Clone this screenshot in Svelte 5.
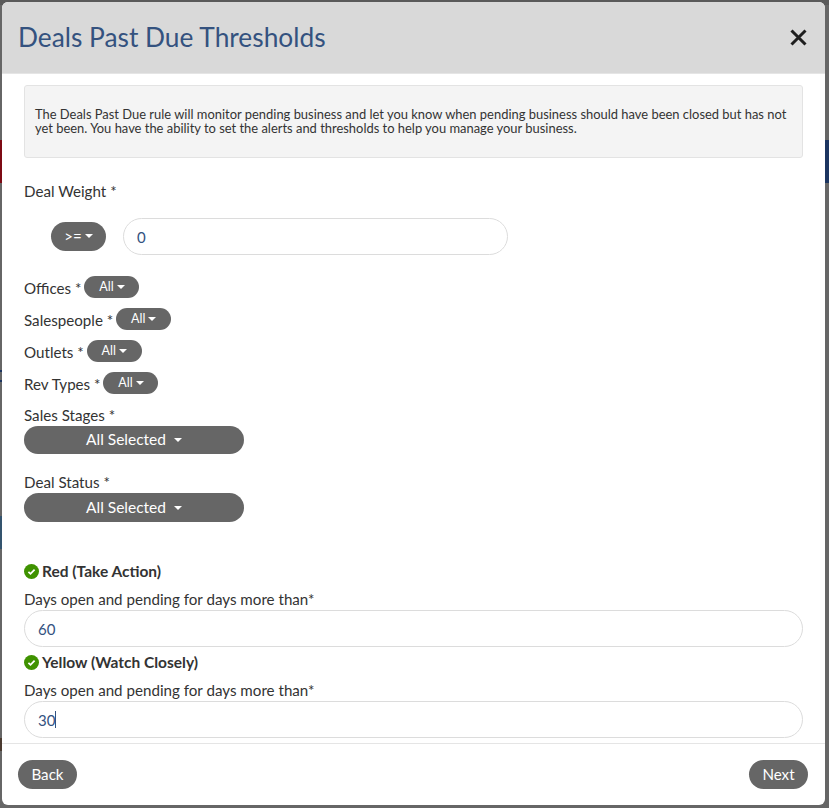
<script>
  const filters = [
    { label: 'Offices *' },
    { label: 'Salespeople *' },
    { label: 'Outlets *' },
    { label: 'Rev Types *' }
  ];
  const backdrop = [
    { cls: 'red', top: 140, h: 43, left: 0, w: 2 },
    { cls: 'navy', top: 140, h: 43, left: 825, w: 4 },
    { cls: 'navy', top: 370, h: 2, left: 0, w: 2 },
    { cls: 'navy', top: 380, h: 2, left: 0, w: 2 },
    { cls: 'blue', top: 516, h: 33, left: 0, w: 2 },
    { cls: 'brown', top: 738, h: 13, left: 0, w: 2 }
  ];
</script>

<div class="page">
  {#each backdrop as b}
    <div class="bg-patch {b.cls}" style="top:{b.top}px;height:{b.h}px;left:{b.left}px;width:{b.w}px"></div>
  {/each}
  <div class="modal">
    <header class="head">
      <h1>Deals Past Due Thresholds</h1>
      <button class="close" aria-label="Close">
        <svg width="17" height="17" viewBox="0 0 17 17"><path d="M1.5 1.5 15.5 15.5M15.5 1.5 1.5 15.5" stroke="#1f1f1f" stroke-width="3" fill="none"/></svg>
      </button>
    </header>

    <div class="body">
      <div class="well">The Deals Past Due rule will monitor pending business and let you know when pending business should have been closed but has not yet been. You have the ability to set the alerts and thresholds to help you manage your business.</div>

      <div class="label weight-label">Deal Weight *</div>
      <div class="weight-row">
        <button class="pill op">&gt;=<span class="caret"></span></button>
        <div class="input weight">0</div>
      </div>

      <div class="filters">
        {#each filters as f}
          <div class="filter">
            <span class="label">{f.label}</span>
            <button class="pill small">All<span class="caret"></span></button>
          </div>
        {/each}
      </div>

      <div class="label stage-label">Sales Stages *</div>
      <button class="pill wide">All Selected <span class="caret big"></span></button>
      <div class="label status-label">Deal Status *</div>
      <button class="pill wide tall">All Selected <span class="caret big"></span></button>

      <div class="level first">
        <svg width="15" height="15" viewBox="0 0 15 15"><circle cx="7.5" cy="7.5" r="7.5" fill="#3f9200"/><path d="M4.4 7.8 6.5 9.8 10.6 5.6" stroke="#fff" stroke-width="1.8" fill="none"/></svg>
        <b>Red (Take Action)</b>
      </div>
      <div class="label days">Days open and pending for days more than*</div>
      <div class="input">60</div>

      <div class="level">
        <svg width="15" height="15" viewBox="0 0 15 15"><circle cx="7.5" cy="7.5" r="7.5" fill="#3f9200"/><path d="M4.4 7.8 6.5 9.8 10.6 5.6" stroke="#fff" stroke-width="1.8" fill="none"/></svg>
        <b>Yellow (Watch Closely)</b>
      </div>
      <div class="label days">Days open and pending for days more than*</div>
      <div class="input">30<span class="cursor"></span></div>
    </div>

    <footer class="foot">
      <button class="pill nav">Back</button>
      <button class="pill nav">Next</button>
    </footer>
  </div>
</div>

<style>
  :global(body) {
    margin: 0;
    background: #666;
  }
  .page {
    position: relative;
    width: 829px;
    height: 808px;
    overflow: hidden;
    padding: 2px 4px 3px 2px;
    box-sizing: border-box;
    font-family: Lato, "Open Sans", sans-serif;
    color: #333;
    background: linear-gradient(#5a5a5a 0, #5a5a5a 5px, #666 5px);
  }
  .bg-patch { position: absolute; }
  .red { background: #7d0a14; }
  .navy { background: #1c3560; }
  .blue { background: #34546e; }
  .brown { background: #4a3a30; }
  .modal {
    position: relative;
    width: 823px;
    height: 803px;
    background: #fff;
    border-radius: 6px;
    overflow: hidden;
    display: flex;
    flex-direction: column;
  }
  .head {
    height: 72px;
    flex: none;
    background: #d9d9d9;
    border-bottom: 1px solid #e5e5e5;
    box-sizing: border-box;
    display: flex;
    align-items: center;
    justify-content: space-between;
    padding: 0 18px 0 16px;
  }
  h1 {
    margin: 0;
    font-size: 26.3px;
    font-weight: 400;
    color: #34527f;
    line-height: 1.1;
  }
  .close {
    border: 0;
    background: none;
    padding: 0;
    display: flex;
  }
  .body {
    flex: 1;
    padding: 11px 22px 0;
    min-height: 0;
  }
  .well {
    height: 73px;
    box-sizing: border-box;
    background: #f4f4f4;
    border: 1px solid #e3e3e3;
    border-radius: 3px;
    padding: 21px 10px 0;
    font-size: 12.93px;
    line-height: 14px;
    color: #333;
  }
  .label {
    font-size: 15.15px;
    line-height: 20px;
    color: #333;
  }
  .weight-label { margin-top: 23px; }
  .weight-row {
    display: flex;
    align-items: center;
    gap: 17px;
    margin: 17px 0 0 27px;
  }
  .pill {
    background: #666;
    color: #fff;
    border: 0;
    border-radius: 999px;
    font-family: inherit;
    padding: 0;
    display: inline-flex;
    align-items: center;
    justify-content: center;
  }
  .caret {
    display: inline-block;
    width: 0;
    height: 0;
    border-left: 4px solid transparent;
    border-right: 4px solid transparent;
    border-top: 4px solid #fff;
    margin-left: 3px;
  }
  .op {
    width: 55px;
    height: 29px;
    font-size: 15px;
    padding-bottom: 1px;
  }
  .input {
    height: 37px;
    box-sizing: border-box;
    border: 1px solid #dcdcdc;
    border-radius: 19px;
    padding: 0 13px;
    display: flex;
    align-items: center;
    color: #34527f;
    font-size: 15px;
    background: #fff;
  }
  .weight { width: 385px; }
  .filters {
    display: flex;
    flex-direction: column;
    gap: 10px;
    margin-top: 21px;
  }
  .filter {
    display: flex;
    align-items: center;
    gap: 3px;
    height: 22px;
  }
  .filter .label { margin-top: 2px; }
  .small {
    width: 55px;
    height: 22px;
    font-size: 12.5px;
    padding-bottom: 1px;
  }
  .stage-label { margin-top: 11px; }
  .status-label { margin-top: 18px; }
  .wide {
    width: 220px;
    height: 28px;
    font-size: 15.5px;
    white-space: pre;
    display: flex;
    margin-top: 1px;
    padding-bottom: 2px;
  }
  .tall { height: 29px; }
  .caret.big { margin: 2px 0 0 4px; }
  .level {
    display: flex;
    align-items: center;
    gap: 3px;
    height: 20px;
    font-size: 15.5px;
    margin-top: 5px;
  }
  .level.first { margin-top: 39px; }
  .level b { font-weight: 700; color: #333; }
  .days { margin-top: 8px; }
  .days + .input { margin-top: 1px; }
  .cursor {
    display: inline-block;
    width: 1px;
    height: 17px;
    background: #34527f;
  }
  .foot {
    height: 62px;
    flex: none;
    box-sizing: border-box;
    border-top: 1px solid #e5e5e5;
    display: flex;
    justify-content: space-between;
    align-items: flex-start;
    padding: 16px 17px 0 16px;
  }
  .nav {
    width: 59px;
    height: 29px;
    font-size: 15.15px;
    padding-bottom: 1px;
  }
</style>
